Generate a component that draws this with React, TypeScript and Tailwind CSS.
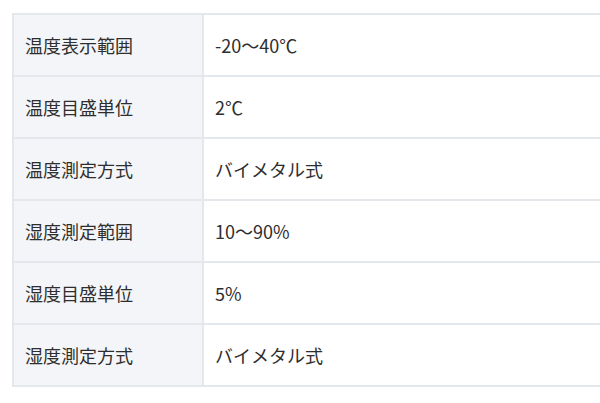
import React from 'react';

const rows = [
  { label: '温度表示範囲', value: '-20〜40℃' },
  { label: '温度目盛単位', value: '2℃' },
  { label: '温度測定方式', value: 'バイメタル式' },
  { label: '湿度測定範囲', value: '10〜90%' },
  { label: '湿度目盛単位', value: '5%' },
  { label: '湿度測定方式', value: 'バイメタル式' },
];

const App = () => {
  return (
    <div className="w-[600px] h-[403px] bg-white pt-[13px] pl-[12px] overflow-hidden font-['Noto_Sans_CJK_JP','Noto_Sans',sans-serif] text-[#2e2e2e]">
      <div className="border-t-2 border-l-2 border-[#e4e7ec]">
        {rows.map((row, i) => (
          <div key={i} className="grid grid-cols-[190px_1fr] h-[62px] border-b-2 border-[#e4e7ec]">
            <div className="flex items-center pl-[11px] bg-[#f4f5f8] border-r-2 border-[#e4e7ec] text-[18px]">
              {row.label}
            </div>
            <div className="flex items-center pl-[11px] text-[18px]">
              {row.value}
            </div>
          </div>
        ))}
      </div>
    </div>
  );
};

export default App;
